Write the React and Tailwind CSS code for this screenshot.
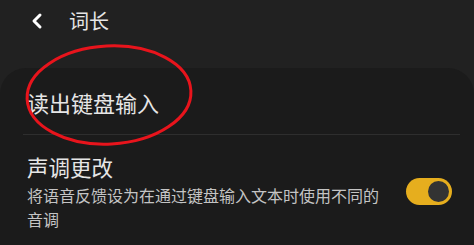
import { ChevronLeft } from "lucide-react";

const font = { fontFamily: '"Noto Sans CJK SC", "Noto Sans", sans-serif' };

const Toggle = ({ on }) => (
  <div
    className={`w-[46px] h-[27px] rounded-full p-[1px] flex items-center ${
      on ? "bg-[#e6ae1e] justify-end" : "bg-[#555] justify-start"
    }`}
  >
    <div className="w-[25px] h-[25px] rounded-full bg-[#333333] border-2 border-[#e6ae1e]" />
  </div>
);

export default function App() {
  return (
    <div
      className="relative w-[474px] h-[245px] bg-[#212121] overflow-hidden flex flex-col text-[#e6e6e6]"
      style={font}
    >
      <div className="h-[68px] flex items-start pt-[7px] pl-[25px] gap-[20px]">
        <ChevronLeft size={24} strokeWidth={3} className="mt-[2px] text-white" />
        <span className="text-[20px] leading-[28px]">词长</span>
      </div>

      <div className="flex-1 bg-[#1b1b1b] rounded-t-[26px] pl-[27px] pr-[14px]">
        <div className="h-[66px] flex items-center pt-[2px]">
          <span className="text-[22px] leading-[30px]">读出键盘输入</span>
        </div>
        <div className="h-px bg-[#2e2e2e] -ml-[4px]" />
        <div className="flex items-center pt-[17px] pr-[8px]">
          <div className="flex-1 pr-[20px]">
            <div className="text-[21.5px] leading-[30px]">声调更改</div>
            <div className="text-[16px] leading-[24px] text-[#c4c4c4] mt-[1px]">
              将语音反馈设为在通过键盘输入文本时使用不同的音调
            </div>
          </div>
          <Toggle on />
        </div>
      </div>

      <svg
        className="absolute left-0 top-0 pointer-events-none"
        width="474"
        height="245"
      >
        <ellipse
          cx="109"
          cy="95"
          rx="82"
          ry="49"
          fill="none"
          stroke="#e8141c"
          strokeWidth="3"
          transform="rotate(-3 109 95)"
        />
      </svg>
    </div>
  );
}
